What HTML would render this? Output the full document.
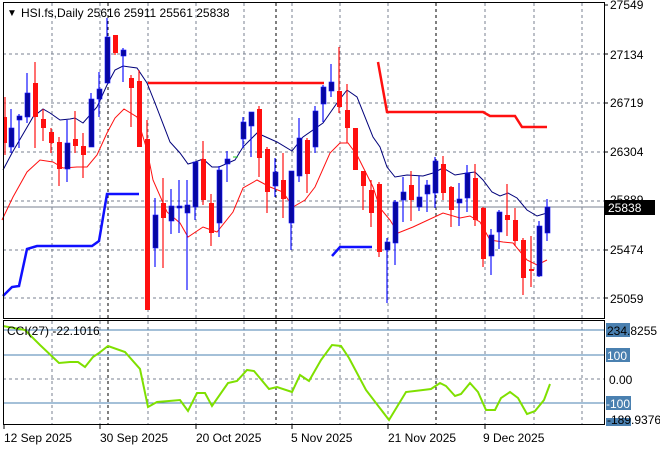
<!DOCTYPE html>
<html><head><meta charset="utf-8"><style>
html,body{margin:0;padding:0;background:#fff;}
svg{display:block;font-family:"Liberation Sans",sans-serif;font-size:11px;}
.g{stroke:#7a8290;stroke-width:1;stroke-dasharray:3,3;}
.k{stroke:#000;stroke-width:1;stroke-dasharray:3,3;}
.b line{stroke:#1414ff;stroke-width:1.2}
.b rect{fill:#0707a0;stroke:#1414ff;stroke-width:0.6}
.r line{stroke:#ff1010;stroke-width:1.2}
.r rect{fill:#ff1010}
</style></head><body>
<svg width="660" height="450" viewBox="0 0 660 450" xmlns="http://www.w3.org/2000/svg">
<rect width="660" height="450" fill="#fff"/>
<g>
<line class="g" x1="52" y1="3" x2="52" y2="318"/><line class="g" x1="100" y1="3" x2="100" y2="318"/><line class="g" x1="148" y1="3" x2="148" y2="318"/><line class="g" x1="196" y1="3" x2="196" y2="318"/><line class="g" x1="244" y1="3" x2="244" y2="318"/><line class="g" x1="292" y1="3" x2="292" y2="318"/><line class="g" x1="340" y1="3" x2="340" y2="318"/><line class="g" x1="388" y1="3" x2="388" y2="318"/><line class="g" x1="485" y1="3" x2="485" y2="318"/><line class="g" x1="534" y1="3" x2="534" y2="318"/><line class="g" x1="582" y1="3" x2="582" y2="318"/>
<line class="k" x1="108" y1="3" x2="108" y2="318"/><line class="k" x1="276" y1="3" x2="276" y2="318"/><line class="k" x1="436" y1="3" x2="436" y2="318"/>
<line class="g" x1="3" y1="54" x2="604" y2="54"/><line class="g" x1="3" y1="103" x2="604" y2="103"/><line class="g" x1="3" y1="152" x2="604" y2="152"/><line class="g" x1="3" y1="201" x2="604" y2="201"/><line class="g" x1="3" y1="250" x2="604" y2="250"/><line class="g" x1="3" y1="298" x2="604" y2="298"/>
</g>
<line x1="3" y1="207" x2="604" y2="207" stroke="#7a8290" stroke-width="1"/>
<polyline fill="none" stroke="#1010ff" stroke-width="2.5" points="3,296 12,287 19,286 27,249 37,246 92,246 99,241 107,194 139,194"/>
<polyline fill="none" stroke="#1010ff" stroke-width="2.5" points="332,256 340,247 372,247"/>
<polyline fill="none" stroke="#ff1010" stroke-width="2.5" points="148,83 324,83"/>
<polyline fill="none" stroke="#ff1010" stroke-width="2.5" points="378,62 387,112 483,112 490,116 515,116 522,127 547,127"/>
<polyline fill="none" stroke="#00007a" stroke-width="1" points="3,170 12,153 33,117 43,109 50,113 60,120 70,119 75,118 83,123 97,107 107,85 115,70 123,66 137,68 147,83 155,103 170,142 180,153 188,164 195,162 203,159 212,167 219,167 235,160 243,147 257,133 277,142 292,151 303,137 323,123 337,103 347,90 357,97 373,137 380,147 387,167 395,177 407,175 423,176 433,173 443,168 455,175 467,173 475,172 483,180 492,192 500,196 508,193 517,198 527,210 537,216 547,213"/>
<polyline fill="none" stroke="#ff1010" stroke-width="1" points="2,220 13,197 27,172 40,160 53,162 63,168 77,167 87,167 97,155 107,133 115,118 124,109 137,117 147,150 153,180 167,212 180,223 188,237 203,227 217,232 233,212 243,188 257,180 270,187 283,192 293,207 305,200 315,187 330,153 340,143 348,143 357,155 373,187 380,208 390,220 398,233 413,227 443,213 460,218 470,216 480,222 490,240 503,242 513,243 527,260 537,265 547,260"/>
<line x1="233" y1="157" x2="238" y2="157" stroke="#22cc22" stroke-width="1"/>
<g class="r"><line x1="5" y1="97" x2="5" y2="155"/><rect x="3" y="117" width="4" height="26"/></g>
<g class="b"><line x1="11" y1="109" x2="11" y2="153"/><rect x="9" y="128" width="5" height="19"/></g>
<g class="b"><line x1="19" y1="114" x2="19" y2="148"/><rect x="17" y="116" width="5" height="4"/></g>
<g class="b"><line x1="27" y1="73" x2="27" y2="123"/><rect x="25" y="93" width="5" height="24"/></g>
<g class="r"><line x1="35" y1="62" x2="35" y2="148"/><rect x="33" y="83" width="5" height="34"/></g>
<g class="r"><line x1="43" y1="109" x2="43" y2="141"/><rect x="41" y="119" width="5" height="9"/></g>
<g class="r"><line x1="51" y1="128" x2="51" y2="153"/><rect x="49" y="132" width="5" height="11"/></g>
<g class="r"><line x1="59" y1="137" x2="59" y2="186"/><rect x="57" y="142" width="5" height="27"/></g>
<g class="b"><line x1="67" y1="120" x2="67" y2="182"/><rect x="65" y="143" width="5" height="26"/></g>
<g class="r"><line x1="75" y1="111" x2="75" y2="153"/><rect x="73" y="139" width="5" height="7"/></g>
<g class="r"><line x1="83" y1="133" x2="83" y2="178"/><rect x="81" y="146" width="5" height="9"/></g>
<g class="b"><line x1="91" y1="93" x2="91" y2="147"/><rect x="89" y="99" width="5" height="48"/></g>
<g class="b"><line x1="99" y1="72" x2="99" y2="117"/><rect x="97" y="89" width="5" height="10"/></g>
<g class="b"><line x1="107" y1="18" x2="107" y2="83"/><rect x="105" y="37" width="5" height="46"/></g>
<g class="r"><line x1="115" y1="35" x2="115" y2="55"/><rect x="113" y="35" width="5" height="18"/></g>
<g class="b"><line x1="123" y1="48" x2="123" y2="82"/><rect x="121" y="50" width="5" height="6"/></g>
<g class="r"><line x1="131" y1="75" x2="131" y2="127"/><rect x="129" y="78" width="5" height="10"/></g>
<g class="r"><line x1="139" y1="70" x2="139" y2="147"/><rect x="137" y="81" width="5" height="66"/></g>
<g class="r"><line x1="147" y1="120" x2="147" y2="310"/><rect x="145" y="139" width="5" height="171"/></g>
<g class="b"><line x1="155" y1="198" x2="155" y2="267"/><rect x="153" y="215" width="5" height="33"/></g>
<g class="r"><line x1="163" y1="178" x2="163" y2="268"/><rect x="161" y="203" width="5" height="15"/></g>
<g class="b"><line x1="171" y1="189" x2="171" y2="234"/><rect x="169" y="206" width="5" height="15"/></g>
<g class="b"><line x1="179" y1="180" x2="179" y2="233"/><rect x="177" y="206" width="5" height="2"/></g>
<g class="b"><line x1="187" y1="180" x2="187" y2="290"/><rect x="185" y="205" width="5" height="8"/></g>
<g class="b"><line x1="195" y1="162" x2="195" y2="220"/><rect x="193" y="162" width="5" height="45"/></g>
<g class="r"><line x1="203" y1="141" x2="203" y2="205"/><rect x="201" y="159" width="5" height="41"/></g>
<g class="r"><line x1="211" y1="194" x2="211" y2="246"/><rect x="209" y="203" width="5" height="30"/></g>
<g class="b"><line x1="219" y1="166" x2="219" y2="237"/><rect x="217" y="170" width="5" height="53"/></g>
<g class="b"><line x1="227" y1="151" x2="227" y2="182"/><rect x="225" y="159" width="5" height="5"/></g>
<g class="b"><line x1="243" y1="117" x2="243" y2="148"/><rect x="241" y="122" width="5" height="17"/></g>
<g class="b"><line x1="251" y1="112" x2="251" y2="157"/><rect x="249" y="112" width="5" height="14"/></g>
<g class="r"><line x1="259" y1="106" x2="259" y2="177"/><rect x="257" y="109" width="5" height="49"/></g>
<g class="r"><line x1="267" y1="147" x2="267" y2="213"/><rect x="265" y="149" width="5" height="43"/></g>
<g class="b"><line x1="275" y1="158" x2="275" y2="197"/><rect x="273" y="172" width="5" height="14"/></g>
<g class="r"><line x1="283" y1="153" x2="283" y2="218"/><rect x="281" y="180" width="5" height="19"/></g>
<g class="b"><line x1="291" y1="171" x2="291" y2="250"/><rect x="289" y="171" width="5" height="52"/></g>
<g class="b"><line x1="299" y1="118" x2="299" y2="182"/><rect x="297" y="138" width="5" height="38"/></g>
<g class="r"><line x1="307" y1="138" x2="307" y2="193"/><rect x="305" y="140" width="5" height="34"/></g>
<g class="b"><line x1="315" y1="106" x2="315" y2="153"/><rect x="313" y="111" width="5" height="36"/></g>
<g class="b"><line x1="323" y1="85" x2="323" y2="122"/><rect x="321" y="87" width="5" height="17"/></g>
<g class="b"><line x1="331" y1="64" x2="331" y2="97"/><rect x="329" y="82" width="5" height="9"/></g>
<g class="r"><line x1="339" y1="47" x2="339" y2="113"/><rect x="337" y="91" width="5" height="16"/></g>
<g class="r"><line x1="347" y1="84" x2="347" y2="143"/><rect x="345" y="110" width="5" height="18"/></g>
<g class="r"><line x1="355" y1="128" x2="355" y2="170"/><rect x="353" y="128" width="5" height="42"/></g>
<g class="r"><line x1="363" y1="171" x2="363" y2="210"/><rect x="361" y="171" width="5" height="15"/></g>
<g class="r"><line x1="371" y1="180" x2="371" y2="227"/><rect x="369" y="190" width="5" height="23"/></g>
<g class="r"><line x1="379" y1="182" x2="379" y2="257"/><rect x="377" y="184" width="5" height="68"/></g>
<g class="b"><line x1="387" y1="238" x2="387" y2="303"/><rect x="385" y="242" width="5" height="8"/></g>
<g class="b"><line x1="395" y1="200" x2="395" y2="265"/><rect x="393" y="202" width="5" height="41"/></g>
<g class="b"><line x1="403" y1="177" x2="403" y2="222"/><rect x="401" y="192" width="5" height="8"/></g>
<g class="r"><line x1="411" y1="171" x2="411" y2="221"/><rect x="409" y="185" width="5" height="15"/></g>
<g class="b"><line x1="419" y1="176" x2="419" y2="211"/><rect x="417" y="197" width="5" height="10"/></g>
<g class="b"><line x1="427" y1="180" x2="427" y2="212"/><rect x="425" y="185" width="5" height="9"/></g>
<g class="b"><line x1="435" y1="157" x2="435" y2="208"/><rect x="433" y="161" width="5" height="32"/></g>
<g class="r"><line x1="443" y1="156" x2="443" y2="200"/><rect x="441" y="164" width="5" height="29"/></g>
<g class="r"><line x1="451" y1="186" x2="451" y2="227"/><rect x="449" y="187" width="5" height="23"/></g>
<g class="b"><line x1="459" y1="183" x2="459" y2="226"/><rect x="457" y="199" width="5" height="4"/></g>
<g class="b"><line x1="467" y1="165" x2="467" y2="212"/><rect x="465" y="173" width="5" height="25"/></g>
<g class="r"><line x1="475" y1="164" x2="475" y2="226"/><rect x="473" y="178" width="5" height="42"/></g>
<g class="r"><line x1="483" y1="207" x2="483" y2="267"/><rect x="481" y="208" width="5" height="51"/></g>
<g class="b"><line x1="491" y1="229" x2="491" y2="275"/><rect x="489" y="235" width="5" height="21"/></g>
<g class="b"><line x1="499" y1="210" x2="499" y2="249"/><rect x="497" y="212" width="5" height="20"/></g>
<g class="r"><line x1="507" y1="184" x2="507" y2="236"/><rect x="505" y="215" width="5" height="5"/></g>
<g class="r"><line x1="515" y1="208" x2="515" y2="246"/><rect x="513" y="220" width="5" height="21"/></g>
<g class="r"><line x1="523" y1="238" x2="523" y2="295"/><rect x="521" y="240" width="5" height="38"/></g>
<g class="r"><line x1="531" y1="236" x2="531" y2="287"/><rect x="529" y="269" width="5" height="2"/></g>
<g class="b"><line x1="539" y1="221" x2="539" y2="277"/><rect x="537" y="226" width="5" height="50"/></g>
<g class="b"><line x1="547" y1="199" x2="547" y2="241"/><rect x="545" y="207" width="5" height="26"/></g>
<rect x="3.5" y="2.5" width="601" height="316" fill="none" stroke="#000" stroke-width="1"/>
<text x="7" y="16" font-size="10">▼</text>
<text x="21" y="17" font-size="12">HSI.fs,Daily  25616 25911 25561 25838</text>
<g font-size="12">
<line x1="604" y1="5" x2="608" y2="5" stroke="#000"/><text x="610" y="9">27549</text>
<line x1="604" y1="54" x2="608" y2="54" stroke="#000"/><text x="610" y="59">27134</text>
<line x1="604" y1="103" x2="608" y2="103" stroke="#000"/><text x="610" y="107">26719</text>
<line x1="604" y1="152" x2="608" y2="152" stroke="#000"/><text x="610" y="156">26304</text>
<text x="610" y="204">25889</text>
<line x1="604" y1="250" x2="608" y2="250" stroke="#000"/><text x="610" y="254">25474</text>
<line x1="604" y1="298" x2="608" y2="298" stroke="#000"/><text x="610" y="303">25059</text>
<rect x="605" y="200" width="50" height="15" fill="#000"/>
<text x="608" y="212" fill="#fff">25838</text>
</g>
<line class="g" x1="52" y1="321" x2="52" y2="424"/><line class="g" x1="100" y1="321" x2="100" y2="424"/><line class="g" x1="148" y1="321" x2="148" y2="424"/><line class="g" x1="196" y1="321" x2="196" y2="424"/><line class="g" x1="244" y1="321" x2="244" y2="424"/><line class="g" x1="292" y1="321" x2="292" y2="424"/><line class="g" x1="340" y1="321" x2="340" y2="424"/><line class="g" x1="388" y1="321" x2="388" y2="424"/><line class="g" x1="485" y1="321" x2="485" y2="424"/><line class="g" x1="534" y1="321" x2="534" y2="424"/><line class="g" x1="582" y1="321" x2="582" y2="424"/>
<line class="k" x1="108" y1="321" x2="108" y2="424"/><line class="k" x1="276" y1="321" x2="276" y2="424"/><line class="k" x1="436" y1="321" x2="436" y2="424"/>
<line x1="3" y1="330" x2="604" y2="330" stroke="#4a80b0"/>
<line x1="3" y1="355" x2="604" y2="355" stroke="#4a80b0"/>
<line class="g" x1="3" y1="379" x2="604" y2="379"/>
<line x1="3" y1="403" x2="604" y2="403" stroke="#4a80b0"/>
<polyline fill="none" stroke="#7fe000" stroke-width="2" points="3,326 25,330 40,345 59,363 70,362 78,362 85,367 93,357 99,353 108,346 125,352 140,369 148,407 157,402 169,401 180,400 188,411 197,393 205,393 212,406 228,383 237,381 247,370 254,371 269,389 277,387 292,392 300,375 309,381 321,360 332,345 341,346 349,358 366,390 389,420 406,392 423,390 431,389 440,383 446,386 455,396 461,394 470,383 478,392 486,410 495,410 501,398 510,392 518,398 527,414 535,411 544,400 550,384"/>
<rect x="3.5" y="320.5" width="601" height="104" fill="none" stroke="#000" stroke-width="1"/>
<text x="7" y="335" font-size="12">CCI(27) -22.1016</text>
<g font-size="12">
<rect x="606" y="323" width="24" height="14" fill="#4a80b0"/>
<text x="607" y="335">234.8255</text>
<rect x="606" y="348" width="24" height="14" fill="#4a80b0"/>
<text x="607" y="360" fill="#fff">100</text>
<text x="609" y="384">0.00</text>
<rect x="606" y="396" width="25" height="14" fill="#4a80b0"/>
<text x="606" y="408" fill="#fff">-100</text>
<rect x="606" y="418" width="25" height="8" fill="#4a80b0"/>
<text x="607" y="424">-189.9376</text>
</g>
<g stroke="#000"><line x1="4" y1="425" x2="4" y2="429"/><line x1="100" y1="425" x2="100" y2="429"/><line x1="196" y1="425" x2="196" y2="429"/><line x1="292" y1="425" x2="292" y2="429"/><line x1="388" y1="425" x2="388" y2="429"/><line x1="485" y1="425" x2="485" y2="429"/></g>
<g font-size="12">
<text x="4" y="442">12 Sep 2025</text>
<text x="100" y="442">30 Sep 2025</text>
<text x="196" y="442">20 Oct 2025</text>
<text x="291" y="442">5 Nov 2025</text>
<text x="388" y="442">21 Nov 2025</text>
<text x="483" y="442">9 Dec 2025</text>
</g>
</svg>
</body></html>
